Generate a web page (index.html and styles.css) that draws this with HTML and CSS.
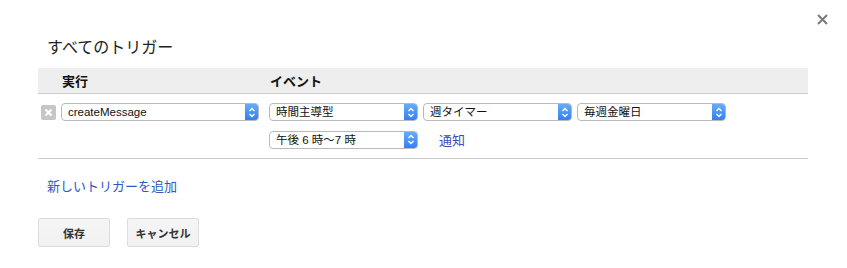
FILE: index.html
```html
<!DOCTYPE html>
<html>
	<head>
		<meta charset="UTF-8">
		<title>すべてのトリガー</title>
		<link rel="stylesheet" href="styles.css">
	</head>
	<body>
		<div class="dialog">
			<!--閉じる-->
			<div class="close">
				<svg width="11" height="11" viewBox="0 0 11 11"><path d="M1 1L10 10M10 1L1 10" stroke="#7a7a7a" stroke-width="2"/></svg>
			</div>
			<h2 class="title">すべてのトリガー</h2>
			<div class="head">
				<div class="col-run">実行</div>
				<div class="col-event">イベント</div>
			</div>
			<div class="trigger">
				<div class="run">
					<span class="del">
						<svg width="15" height="15" viewBox="0 0 15 15"><path d="M4.5 4.5L10.5 10.5M10.5 4.5L4.5 10.5" stroke="#fff" stroke-width="2.2"/></svg>
					</span>
					<div class="sel sel-wide"><span class="txt">createMessage</span><span class="arrow"><svg width="8" height="11" viewBox="0 0 8 11"><path d="M1.5 4L4 1.5L6.5 4M1.5 7L4 9.5L6.5 7" fill="none" stroke="#fff" stroke-width="1.4"/></svg></span></div>
				</div>
				<div class="event">
					<div class="line">
						<div class="sel"><span class="txt">時間主導型</span><span class="arrow"><svg width="8" height="11" viewBox="0 0 8 11"><path d="M1.5 4L4 1.5L6.5 4M1.5 7L4 9.5L6.5 7" fill="none" stroke="#fff" stroke-width="1.4"/></svg></span></div>
						<div class="sel"><span class="txt">週タイマー</span><span class="arrow"><svg width="8" height="11" viewBox="0 0 8 11"><path d="M1.5 4L4 1.5L6.5 4M1.5 7L4 9.5L6.5 7" fill="none" stroke="#fff" stroke-width="1.4"/></svg></span></div>
						<div class="sel"><span class="txt">毎週金曜日</span><span class="arrow"><svg width="8" height="11" viewBox="0 0 8 11"><path d="M1.5 4L4 1.5L6.5 4M1.5 7L4 9.5L6.5 7" fill="none" stroke="#fff" stroke-width="1.4"/></svg></span></div>
					</div>
					<div class="line">
						<div class="sel"><span class="txt">午後 6 時〜7 時</span><span class="arrow"><svg width="8" height="11" viewBox="0 0 8 11"><path d="M1.5 4L4 1.5L6.5 4M1.5 7L4 9.5L6.5 7" fill="none" stroke="#fff" stroke-width="1.4"/></svg></span></div>
						<a class="notify" href="#">通知</a>
					</div>
				</div>
			</div>
			<a class="add" href="#">新しいトリガーを追加</a>
			<div class="buttons">
				<button class="btn">保存</button>
				<button class="btn">キャンセル</button>
			</div>
		</div>
	</body>
</html>
```

FILE: styles.css
```css
* {
	margin: 0;
	padding: 0;
	box-sizing: border-box;
}

body {
	font-family: "Liberation Sans", "Noto Sans CJK JP", sans-serif;
	color: #222;
	background: #fff;
}

.dialog {
	position: relative;
	width: 847px;
	height: 268px;
	padding: 38px 0 0 38px;
}

.close {
	position: absolute;
	top: 14px;
	right: 19px;
	width: 11px;
	height: 11px;
	display: flex;
}

.title {
	font-size: 16px;
	font-weight: normal;
	line-height: 20px;
	margin-left: 9px;
	margin-bottom: 10px;
	color: #222;
}

/* 見出し行 */
.head {
	width: 770px;
	height: 26px;
	background: #eeeeee;
	border-bottom: 1px solid #cccccc;
	display: grid;
	grid-template-columns: 231px 1fr;
	align-items: center;
	font-size: 13px;
	font-weight: bold;
	color: #111;
}

.col-run {
	padding-left: 24px;
}

.col-event {
	padding-left: 1px;
}

/* トリガー行 */
.trigger {
	width: 770px;
	display: grid;
	grid-template-columns: 231px 1fr;
	padding: 9px 0 9px;
	border-bottom: 1px solid #cccccc;
}

.run {
	display: flex;
	align-items: center;
	align-self: start;
	height: 18px;
	padding-left: 3px;
}

.del {
	width: 15px;
	height: 15px;
	background: #c6c6c6;
	border-radius: 2px;
	display: flex;
	margin-right: 5px;
}

.event {
	display: flex;
	flex-direction: column;
	gap: 9px;
}

.line {
	display: flex;
	align-items: center;
	gap: 5px;
}

.sel {
	width: 149px;
	height: 18px;
	display: flex;
	border: 1px solid #b9b9b9;
	border-radius: 4px;
	background: #fff;
	font-size: 11.5px;
	color: #111;
	overflow: hidden;
}

.sel-wide {
	width: 198px;
}

.sel .txt {
	flex: 1;
	line-height: 16px;
	padding-left: 6px;
	white-space: nowrap;
}

.sel .arrow {
	width: 14px;
	margin: -1px -1px -1px 0;
	background: linear-gradient(#6aaefb, #2f7df3);
	border-radius: 0 4px 4px 0;
	display: flex;
	align-items: center;
	justify-content: center;
}

.notify {
	margin-left: 16px;
	font-size: 13px;
	color: #3a4fb0;
	text-decoration: none;
}

.add {
	display: inline-block;
	margin: 20px 0 0 9px;
	font-size: 13px;
	line-height: 16px;
	color: #2b58c4;
	text-decoration: none;
}

.buttons {
	display: flex;
	gap: 17px;
	margin-top: 23px;
}

.btn {
	width: 72px;
	height: 29px;
	font-family: "Liberation Sans", "Noto Sans CJK JP", sans-serif;
	font-size: 11px;
	font-weight: bold;
	color: #333;
	background: linear-gradient(#f5f5f5, #f1f1f1);
	border: 1px solid #dcdcdc;
	border-radius: 2px;
}
```
